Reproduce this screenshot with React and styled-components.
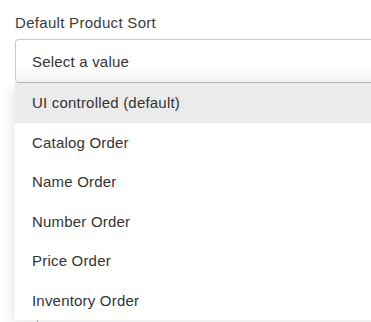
import styled, { createGlobalStyle } from "styled-components";

const Global = createGlobalStyle`
  body {
    margin: 0;
    background: #fff;
    font-family: "Liberation Sans", Arial, sans-serif;
    color: #333;
    overflow: hidden;
  }
`;

const Field = styled.div`
  padding: 14px 0 0 15px;
  width: 380px;
`;

const Label = styled.div`
  font-size: 15px;
  line-height: 18px;
  color: #3a3a3a;
  letter-spacing: 0.3px;
  margin-bottom: 7px;
`;

const SelectWrap = styled.div`
  position: relative;
`;

const SelectBox = styled.div`
  height: 42px;
  box-sizing: content-box;
  border: 1px solid #c8c8c8;
  border-bottom-color: #b8b8b8;
  border-radius: 4px;
  background: linear-gradient(to bottom, #fff 55%, #f4f4f4 100%);
  display: flex;
  align-items: center;
  padding-left: 16px;
  font-size: 15px;
  color: #333;
  letter-spacing: 0.2px;
`;

const Menu = styled.ul`
  position: absolute;
  left: 0;
  right: 0;
  top: 44px;
  margin: 0;
  padding: 0;
  list-style: none;
  background: #fff;
  box-shadow: -4px 4px 10px rgba(0, 0, 0, 0.08);
  z-index: 2;
`;

const Option = styled.li`
  height: 39.5px;
  display: flex;
  align-items: center;
  padding-left: 17px;
  font-size: 15px;
  color: #333;
  letter-spacing: 0.2px;
  background: ${(p) => (p.$active ? "#ebebeb" : "#fff")};
`;

const Below = styled.div`
  margin-top: 237px;
  margin-left: 22px;
  border-left: 1px solid #bbb;
  padding: 2px 0 0 12px;
  font-size: 15px;
  color: #555;
`;

const options = [
  "UI controlled (default)",
  "Catalog Order",
  "Name Order",
  "Number Order",
  "Price Order",
  "Inventory Order",
];

export default function App() {
  return (
    <>
      <Global />
      <Field>
        <Label>Default Product Sort</Label>
        <SelectWrap>
          <SelectBox>Select a value</SelectBox>
          <Menu>
            {options.map((o, i) => (
              <Option key={o} $active={i === 0}>
                {o}
              </Option>
            ))}
          </Menu>
        </SelectWrap>
        <Below>Minus Inventory</Below>
      </Field>
    </>
  );
}
